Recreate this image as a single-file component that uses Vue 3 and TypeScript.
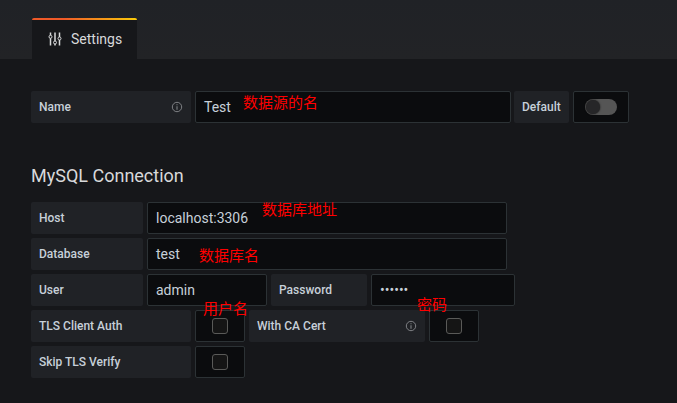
<script setup lang="ts">
import { ref } from 'vue'

interface Note {
  text: string
  x: number
  y: number
}

const name = ref('Test')
const host = ref('localhost:3306')
const database = ref('test')
const user = ref('admin')

const notes: Note[] = [
  { text: '数据源的名', x: 243, y: 93 },
  { text: '数据库地址', x: 262, y: 200 },
  { text: '数据库名', x: 199, y: 246 },
  { text: '用户名', x: 203, y: 299 },
  { text: '密码', x: 417, y: 295 },
]
</script>

<template>
  <div class="page">
    <header class="header">
      <div class="tab">
        <svg class="sliders" width="14" height="14" viewBox="0 0 14 14" fill="none" stroke="currentColor">
          <path d="M2.5 0.5V3.3M2.5 6.3V13.5M7 0.5V9M7 12V13.5M11.5 0.5V5M11.5 8V13.5" stroke-width="1.5" />
          <circle cx="2.5" cy="4.8" r="1.5" />
          <circle cx="7" cy="10.5" r="1.5" />
          <circle cx="11.5" cy="6.5" r="1.5" />
        </svg>
        <span>Settings</span>
      </div>
    </header>

    <main class="content">
      <div class="row">
        <div class="label w160">
          Name
          <svg class="info" width="12" height="12" viewBox="0 0 12 12" fill="none" stroke="currentColor">
            <circle cx="6" cy="6" r="4.7" />
            <path d="M6 5.3V8.7M6 3.2V4.3" stroke-width="1.1" />
          </svg>
        </div>
        <div class="input w316">{{ name }}</div>
        <div class="label default">Default</div>
        <div class="box w56"><span class="switch"><i></i></span></div>
      </div>

      <h3 class="title">MySQL Connection</h3>

      <div class="rows">
        <div class="row">
          <div class="label w112">Host</div>
          <div class="input w360">{{ host }}</div>
        </div>
        <div class="row">
          <div class="label w112">Database</div>
          <div class="input w360">{{ database }}</div>
        </div>
        <div class="row">
          <div class="label w112">User</div>
          <div class="input w120">{{ user }}</div>
          <div class="label w96">Password</div>
          <div class="input w144">••••••</div>
        </div>
        <div class="row">
          <div class="label w160">TLS Client Auth</div>
          <div class="box w50"><span class="check"></span></div>
          <div class="label w176">
            With CA Cert
            <svg class="info" width="12" height="12" viewBox="0 0 12 12" fill="none" stroke="currentColor">
              <circle cx="6" cy="6" r="4.7" />
              <path d="M6 5.3V8.7M6 3.2V4.3" stroke-width="1.1" />
            </svg>
          </div>
          <div class="box w50"><span class="check"></span></div>
        </div>
        <div class="row">
          <div class="label w160">Skip TLS Verify</div>
          <div class="box w50"><span class="check"></span></div>
        </div>
      </div>
    </main>

    <span v-for="n in notes" :key="n.text" class="note" :style="{ left: n.x + 'px', top: n.y + 'px' }">{{ n.text }}</span>
  </div>
</template>

<style>
body {
  background: #16171a;
}
</style>

<style scoped>
.page {
  position: relative;
  width: 677px;
  height: 403px;
  overflow: hidden;
  box-sizing: border-box;
  background: #16171a;
  color: #d8d9da;
  font-family: Roboto, 'Noto Sans CJK SC', sans-serif;
}
.page * {
  box-sizing: border-box;
}
.header {
  display: flex;
  align-items: flex-end;
  height: 59px;
  padding-left: 32px;
  background: linear-gradient(#202226, #222326);
}
.tab {
  display: flex;
  align-items: center;
  gap: 9px;
  width: 105px;
  height: 41px;
  padding: 1px 0 0 16px;
  border-radius: 2px 2px 0 0;
  background: linear-gradient(90deg, #f05a28 30%, #fbca0a 99%) top / 100% 2px no-repeat #16171a;
  font-size: 14px;
}
.content {
  padding: 32px 0 0 31px;
}
.row {
  display: flex;
  gap: 4px;
}
.rows {
  display: flex;
  flex-direction: column;
  gap: 4px;
}
.title {
  height: 28px;
  margin: 39px 0 12px;
  font-size: 18px;
  line-height: 28px;
  font-weight: 400;
}
.label {
  display: flex;
  align-items: center;
  justify-content: space-between;
  height: 32px;
  padding: 0 8px;
  border-radius: 2px;
  background: #202226;
  color: #c7d0d9;
  font-size: 12px;
  font-weight: 500;
  white-space: nowrap;
}
.info {
  color: #7e8084;
}
.input,
.box {
  display: flex;
  align-items: center;
  height: 32px;
  border: 1px solid #2c3235;
  border-radius: 2px;
  background: #0b0c0e;
}
.input {
  padding-left: 8px;
  color: #c7d0d9;
  font-size: 14px;
}
.box {
  justify-content: center;
}
.default {
  width: 55px;
  margin-left: -1px;
}
.w50 { width: 50px; }
.w56 { width: 56px; }
.w96 { width: 96px; }
.w112 { width: 112px; }
.w120 { width: 120px; }
.w144 { width: 144px; }
.w160 { width: 160px; }
.w176 { width: 176px; }
.w316 { width: 316px; }
.w360 { width: 360px; }
.switch {
  width: 32px;
  height: 16px;
  border-radius: 8px;
  background: #555;
}
.switch i {
  display: block;
  width: 14px;
  height: 14px;
  margin: 1px;
  border-radius: 50%;
  background: #262628;
  box-shadow: 0 0 2px #111;
}
.check {
  width: 16px;
  height: 16px;
  border: 1px solid #5a5a58;
  border-radius: 3px;
  background: #151515;
}
.note {
  position: absolute;
  color: #f00;
  font-family: 'Noto Sans CJK SC', sans-serif;
  font-size: 15px;
  font-weight: 400;
  line-height: 18px;
  white-space: nowrap;
}
</style>
